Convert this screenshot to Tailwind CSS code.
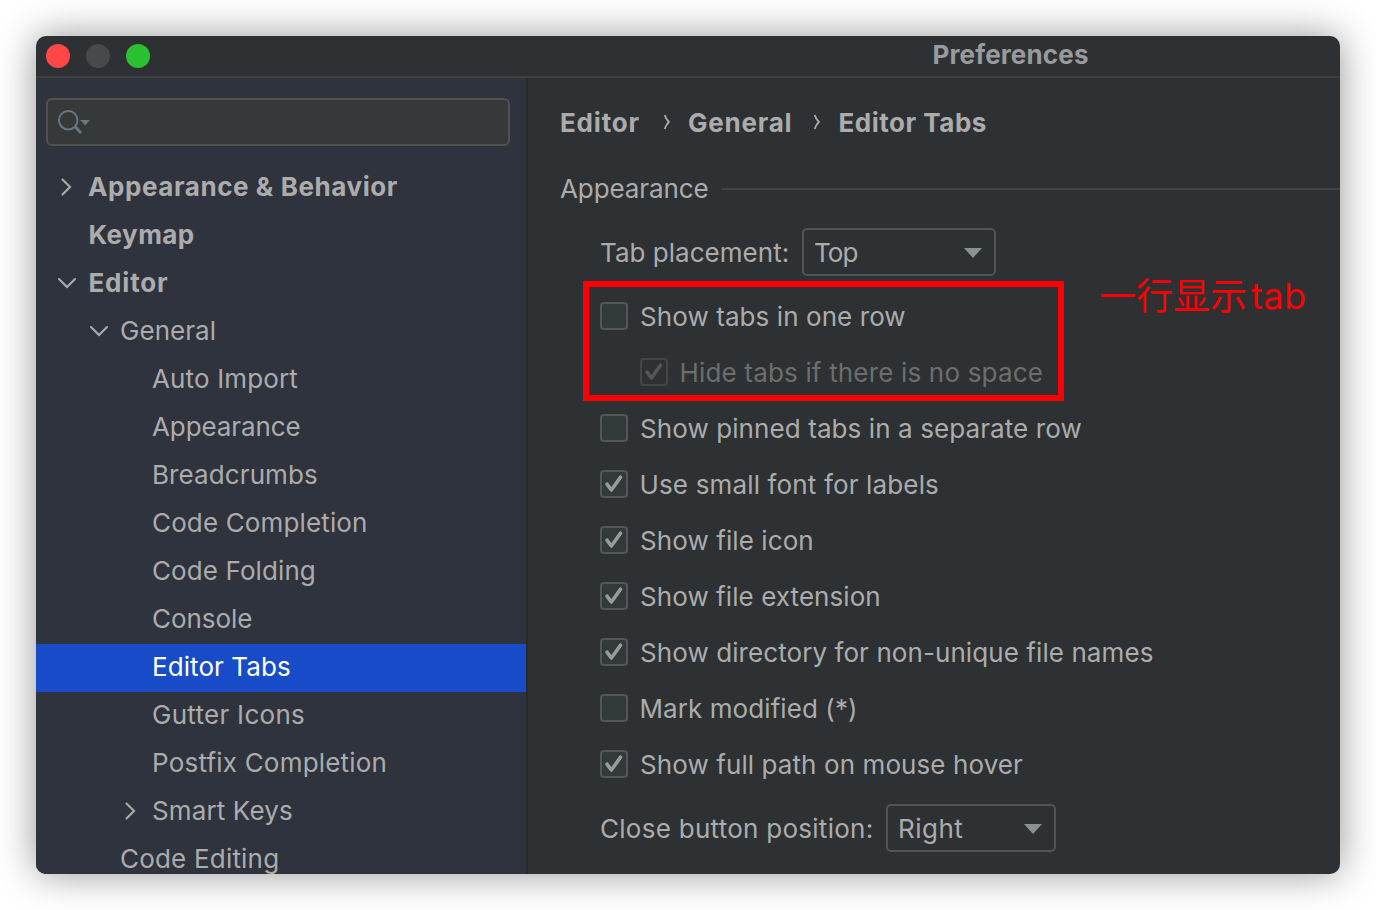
<!DOCTYPE html>
<html lang="en">
<head>
<meta charset="utf-8">
<title>Preferences</title>
<script src="https://cdn.jsdelivr.net/npm/@tailwindcss/browser@4"></script>
</head>
<body class="bg-white overflow-hidden">
<svg class="hidden">
  <symbol id="right" viewBox="0 0 20 20"><path d="M6.500 2.500 14 10l-7.500 7.500" fill="none" stroke="currentColor" stroke-width="2.100" stroke-linecap="round"/></symbol>
  <symbol id="down" viewBox="0 0 20 20"><path d="M2 6l8 8 8-8" fill="none" stroke="currentColor" stroke-width="2.100" stroke-linecap="round"/></symbol>
  <symbol id="check" viewBox="0 0 24 24"><path d="M5 12.200 9.400 18 18.500 5.200" fill="none" stroke="currentColor" stroke-width="3.600" stroke-linecap="round" stroke-linejoin="round"/></symbol>
  <symbol id="crumb" viewBox="0 0 8 16"><path d="M1.700 1C2.600 4 3.900 6.200 5.900 8 3.900 9.800 2.600 12 1.700 15" fill="none" stroke="currentColor" stroke-width="1.800"/></symbol>
</svg>
<div class="w-[1376px] h-[910px] p-9">
<div class="relative flex flex-col w-[1304px] h-[838px] rounded-[10px] overflow-hidden bg-[#2d3133] text-[#acacac] text-[26px] font-['Inter','Noto_Sans_CJK_SC',sans-serif] whitespace-nowrap shadow-[0_0_38px_rgba(0,0,0,0.42)]">
  <header class="flex items-center shrink-0 h-[42px] border-b-2 border-[#423f3f] pl-[10px] gap-4">
    <span class="size-6 rounded-full bg-[#ff4747]"></span>
    <span class="size-6 rounded-full bg-[#48494a]"></span>
    <span class="size-6 rounded-full bg-[#2ac131]"></span>
    <h1 class="ml-[766.500px] pb-[3px] leading-[37px] font-bold tracking-[0.14px] text-[#989a9b]">Preferences</h1>
  </header>
  <div class="flex flex-1 min-h-0">
    <aside class="w-[492px] shrink-0 bg-[#2f333d] border-r-2 border-[#28292b] pt-5 overflow-hidden">
      <div class="flex items-center ml-[10px] mb-[18px] w-[464px] h-12 rounded-[6px] border-2 border-[#515150] bg-[#363939] pl-[9px] text-[#677780]">
        <svg class="w-9 h-7" viewBox="0 0 36 28" fill="none" stroke="currentColor"><circle cx="11.200" cy="12.200" r="9.300" stroke-width="2"/><path d="M17.800 18.500 24 25" stroke-width="3"/><path d="M23.200 12h9.800l-4.900 5.500z" fill="currentColor" stroke="none"/></svg>
      </div>
      <nav class="leading-[46px]">
        <div class="flex h-12 pl-5 font-bold"><svg class="size-5 mt-[13px] mr-3"><use href="#right"/></svg><span class="tracking-[0.58px]">Appearance &amp; Behavior</span></div>
        <div class="h-12 pl-[52.500px] font-bold tracking-[0.43px]">Keymap</div>
        <div class="flex h-12 pl-[21px] font-bold"><svg class="size-5 mt-[13px] mr-[11.500px]"><use href="#down"/></svg><span class="tracking-[0.8px]">Editor</span></div>
        <div class="flex h-12 pl-[53px]"><svg class="size-5 mt-[13px] mr-[11px]"><use href="#down"/></svg><span class="tracking-[0.05px]">General</span></div>
        <div class="h-12 pl-[116px] tracking-[0.14px]">Auto Import</div>
        <div class="h-12 pl-[116px] tracking-[-0.1px]">Appearance</div>
        <div class="h-12 pl-[116px] tracking-[0.1px]">Breadcrumbs</div>
        <div class="h-12 pl-[116px] tracking-[0.14px]">Code Completion</div>
        <div class="h-12 pl-[116px] tracking-[0.1px]">Code Folding</div>
        <div class="h-12 pl-[116px] tracking-[-0.03px]">Console</div>
        <div class="h-12 pl-[116px] tracking-[0.08px] bg-[#184bc8] text-white">Editor Tabs</div>
        <div class="h-12 pl-[116px] tracking-[0.28px]">Gutter Icons</div>
        <div class="h-12 pl-[116px] tracking-[0.2px]">Postfix Completion</div>
        <div class="flex h-12 pl-[84px]"><svg class="size-5 mt-[13px] mr-3"><use href="#right"/></svg><span class="tracking-[0.13px]">Smart Keys</span></div>
        <div class="h-12 pl-[84px] tracking-[0.2px]">Code Editing</div>
      </nav>
    </aside>
    <main class="flex-1 min-w-0 pl-[32px] leading-8">
      <div class="flex items-center h-[88px] font-bold">
        <span class="w-[102.500px] pt-0.5 tracking-[0.83px]">Editor</span>
        <svg class="w-2 h-4 mr-[17.500px]"><use href="#crumb"/></svg>
        <span class="w-[124.500px] pt-0.5 tracking-[0.77px]">General</span>
        <svg class="w-2 h-4 mr-[18px]"><use href="#crumb"/></svg>
        <span class="pt-0.5 tracking-[0.52px]">Editor Tabs</span>
      </div>
      <div class="flex items-center h-[46px]">
        <h2 class="w-[162px] tracking-[-0.1px]">Appearance</h2>
        <div class="flex-1 h-0.5 bg-[#424343]"></div>
      </div>
      <div class="flex items-center mt-4 h-12 pl-[40px]">
        <span class="w-[202px] pt-0.5 tracking-[0.03px]">Tab placement:</span>
        <div class="flex items-center justify-between w-[194px] h-12 rounded-[5px] border-2 border-[#535353] pl-[10px] pr-3"><span class="pt-0.5 tracking-[-0.900px]">Top</span><svg class="w-[18px] h-[10px] mt-0.5 text-[#8b9093]" viewBox="0 0 18 10"><path d="M0 0h18L9 10z" fill="currentColor"/></svg></div>
      </div>
      <div class="pt-3 pl-[40px]">
        <div class="flex items-center h-14"><span class="size-7 mr-3 rounded-[4px] border-2 border-[#555756] bg-[#31393a]"></span><span class="pt-px tracking-[0.08px]">Show tabs in one row</span></div>
        <div class="flex items-center h-14 pl-10 text-[#6c6e6e]"><span class="size-7 mr-[11.500px] rounded-[4px] border-2 border-[#444646] text-[#555757]"><svg class="size-6"><use href="#check"/></svg></span><span class="pt-px tracking-[0.17px]">Hide tabs if there is no space</span></div>
        <div class="flex items-center h-14"><span class="size-7 mr-3 rounded-[4px] border-2 border-[#555756] bg-[#31393a]"></span><span class="pt-px tracking-[0.09px]">Show pinned tabs in a separate row</span></div>
        <div class="flex items-center h-14"><span class="size-7 mr-[11.500px] rounded-[4px] border-2 border-[#555756] bg-[#31393a] text-[#999b9b]"><svg class="size-6"><use href="#check"/></svg></span><span class="pt-px tracking-[0.15px]">Use small font for labels</span></div>
        <div class="flex items-center h-14"><span class="size-7 mr-3 rounded-[4px] border-2 border-[#555756] bg-[#31393a] text-[#999b9b]"><svg class="size-6"><use href="#check"/></svg></span><span class="pt-px tracking-[0.09px]">Show file icon</span></div>
        <div class="flex items-center h-14"><span class="size-7 mr-3 rounded-[4px] border-2 border-[#555756] bg-[#31393a] text-[#999b9b]"><svg class="size-6"><use href="#check"/></svg></span><span class="pt-px tracking-[0.07px]">Show file extension</span></div>
        <div class="flex items-center h-14"><span class="size-7 mr-3 rounded-[4px] border-2 border-[#555756] bg-[#31393a] text-[#999b9b]"><svg class="size-6"><use href="#check"/></svg></span><span class="pt-px tracking-[0.08px]">Show directory for non-unique file names</span></div>
        <div class="flex items-center h-14"><span class="size-7 mr-[11.500px] rounded-[4px] border-2 border-[#555756] bg-[#31393a]"></span><span class="pt-px tracking-[0.08px]">Mark modified (*)</span></div>
        <div class="flex items-center h-14"><span class="size-7 mr-3 rounded-[4px] border-2 border-[#555756] bg-[#31393a] text-[#999b9b]"><svg class="size-6"><use href="#check"/></svg></span><span class="pt-px tracking-[0.09px]">Show full path on mouse hover</span></div>
      </div>
      <div class="flex items-center mt-3 h-12 pl-[40px]">
        <span class="w-[286px] pt-0.5 tracking-[0.27px]">Close button position:</span>
        <div class="flex items-center justify-between w-[170px] h-12 rounded-[5px] border-2 border-[#535353] pl-[10px] pr-3"><span class="pt-0.5 tracking-[0.5px]">Right</span><svg class="w-[18px] h-[10px] mt-0.5 text-[#8b9093]" viewBox="0 0 18 10"><path d="M0 0h18L9 10z" fill="currentColor"/></svg></div>
      </div>
    </main>
  </div>
  <div class="absolute left-[547px] top-[245px] w-[481px] h-[120px] border-[6px] border-[#fb0005]"></div>
  <div class="absolute left-[1045px] top-[226px] w-[242px] h-[67px] bg-[#2f3031] flex items-center pl-[18px] text-[#fb0005]"><span class="pb-[3px] text-[37px] leading-[48px] font-['Noto_Sans_CJK_SC',sans-serif]">一行显示</span><span class="ml-[4px] text-[36px] leading-[48px] tracking-[0.4px]">tab</span></div>
</div>
</div>
</body>
</html>
